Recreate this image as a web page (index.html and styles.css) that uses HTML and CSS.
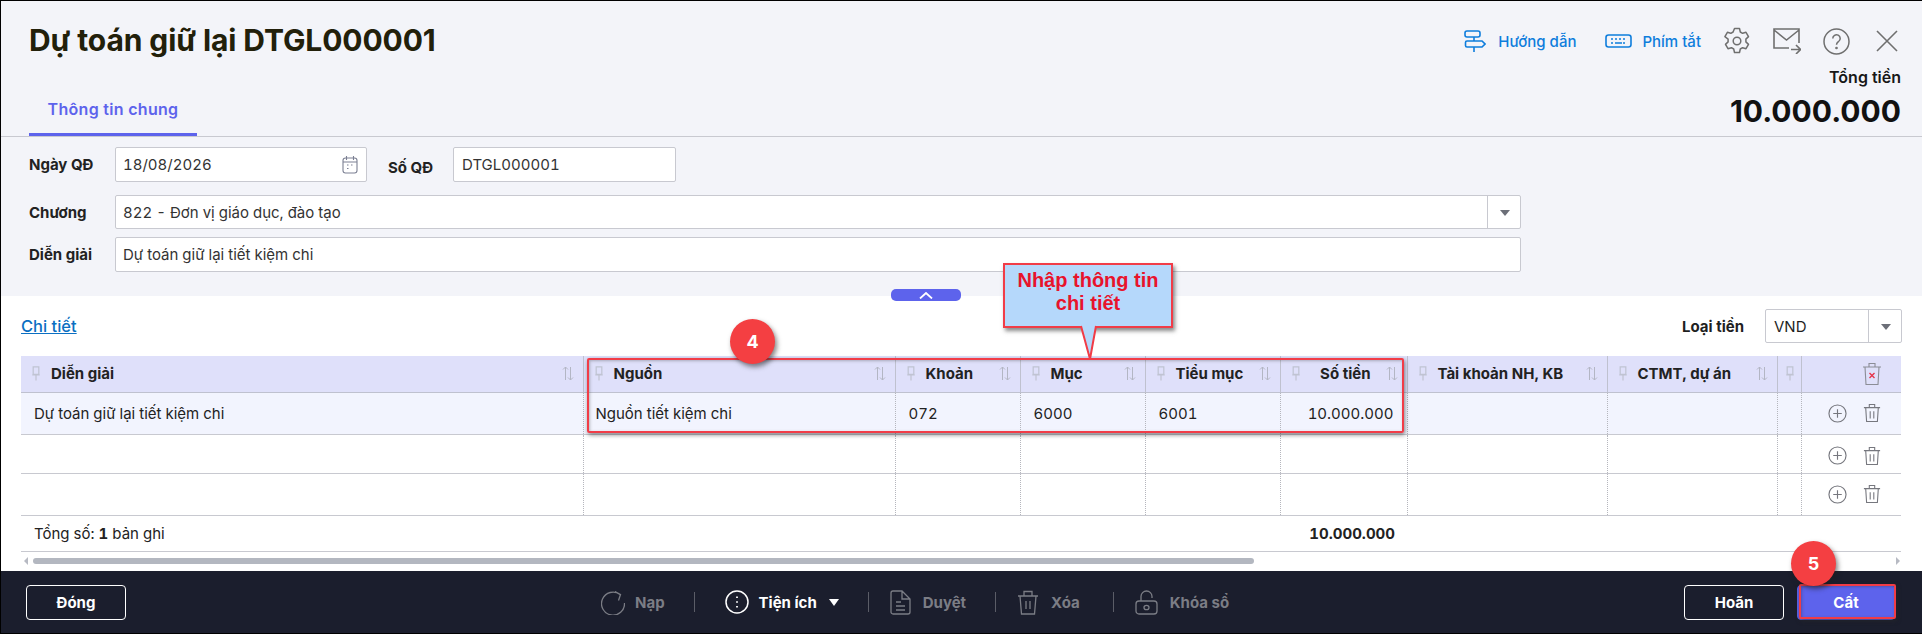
FILE: index.html
```html
<!DOCTYPE html>
<html lang="en">
<head>
  <meta charset="UTF-8">
  <title>Dự toán giữ lại DTGL000001</title>
  <link rel="stylesheet" href="styles.css">
</head>
<body>
  <svg class="defs" width="0" height="0">
    <symbol id="pin" viewBox="0 0 10 16">
      <path d="M2 1h6v8H2zM1 9.500h8M5 10v5.500" fill="none" stroke="currentColor" stroke-width="1.300"/>
    </symbol>
    <symbol id="sort" viewBox="0 0 12 15">
      <path d="M3.500 14V1M1 3.500L3.500 1L6 3.500M8.500 1v13M6 11.500L8.500 14L11 11.500" fill="none" stroke="currentColor" stroke-width="1"/>
    </symbol>
    <symbol id="plus" viewBox="0 0 20 20">
      <circle cx="10" cy="10" r="9" fill="none" stroke="currentColor" stroke-width="1.200"/>
      <path d="M10 5.500v9M5.500 10h9" stroke="currentColor" stroke-width="1.200"/>
    </symbol>
    <symbol id="trash" viewBox="0 0 20 22">
      <path d="M1 5h18M7 5V1.500h6V5M3 5l1 15.500h12L17 5M8 9v8M12 9v8" fill="none" stroke="currentColor" stroke-width="1.200"/>
    </symbol>
  </svg>

  <div class="app">
    <!-- Header -->
    <header class="header">
      <div class="head-top">
        <div class="head-left">
          <h1 class="title">Dự toán giữ lại DTGL000001</h1>
          <a class="tab">Thông tin chung</a>
        </div>
        <div class="head-right">
          <div class="tools">
            <a class="tool-link">
              <svg width="22" height="22" viewBox="0 0 22 22" fill="none" stroke="currentColor" stroke-width="1.600">
                <rect x="1" y="1" width="15" height="6" rx="2"/>
                <path d="M3 11h15l3 3l-3 3H3a1.500 1.500 0 0 1-1.500-1.500v-3A1.500 1.500 0 0 1 3 11zM10 7v4M10 17v5"/>
              </svg>
              Hướng dẫn
            </a>
            <a class="tool-link keys">
              <svg width="27" height="14" viewBox="0 0 27 14" fill="none" stroke="currentColor" stroke-width="1.600">
                <rect x="1" y="1" width="25" height="12" rx="2.500"/>
                <path d="M6 5h2M10 5h2M14 5h2M18 5h2M6 9h2M10 9h7M18 9h2" stroke-width="1.400"/>
              </svg>
              Phím tắt
            </a>
            <svg class="tool-icon gear" width="28" height="28" viewBox="0 0 28 28" fill="none" stroke="currentColor" stroke-width="1.500">
              <circle cx="14" cy="14" r="3.800"/>
              <path d="M11.500 1.500h5l.8 3.500l2.300 1.300l3.400-1l2.500 4.300l-2.600 2.500v2.800l2.600 2.500l-2.500 4.300l-3.400-1l-2.300 1.300l-.8 3.500h-5l-.8-3.500l-2.300-1.300l-3.400 1l-2.500-4.300l2.600-2.500v-2.800L1.900 9.600l2.500-4.300l3.400 1l2.300-1.300z" stroke-linejoin="round"/>
            </svg>
            <svg class="tool-icon mail" width="28" height="26" viewBox="0 0 28 26" fill="none" stroke="currentColor" stroke-width="1.600">
              <path d="M16 20H1V1h25v14M1 2l12.500 10L26 2M18 21.500h9M23 17l4.500 4.500L23 26"/>
            </svg>
            <svg class="tool-icon help" width="27" height="27" viewBox="0 0 27 27" fill="none" stroke="currentColor" stroke-width="1.500">
              <circle cx="13.500" cy="13.500" r="12.500"/>
              <path d="M9.800 10.500a3.700 3.700 0 1 1 5.800 3c-1.300 1-2.100 1.500-2.100 3.200"/>
              <circle cx="13.500" cy="20" r=".6"/>
            </svg>
            <svg class="tool-icon close" width="22" height="22" viewBox="0 0 22 22" fill="none" stroke="currentColor" stroke-width="1.600">
              <path d="M1 1l20 20M21 1L1 21"/>
            </svg>
          </div>
          <div class="total-label">Tổng tiền</div>
          <div class="total-value">10.000.000</div>
        </div>
      </div>

      <form class="info">
        <div class="info-row first">
          <label class="info-label">Ngày QĐ</label>
          <div class="field date">
            18/08/2026
            <svg class="date-icon" width="16" height="19" viewBox="0 0 16 19" fill="none" stroke="#7c8093" stroke-width="1.100">
              <rect x="1" y="3" width="14" height="15" rx="2.500"/>
              <path d="M1 7h14M4.500 1v4M11.500 1v4M5 10h1.500M9 10h1.500M5 13.500h1.500"/>
            </svg>
          </div>
          <label class="info-label second">Số QĐ</label>
          <div class="field number">DTGL000001</div>
        </div>
        <div class="info-row chapter">
          <label class="info-label">Chương</label>
          <div class="field wide">
            <span class="field-text">822 - Đơn vị giáo dục, đào tạo</span>
            <span class="field-arrow"></span>
          </div>
        </div>
        <div class="info-row desc">
          <label class="info-label">Diễn giải</label>
          <div class="field wide">Dự toán giữ lại tiết kiệm chi</div>
        </div>
      </form>
      <button class="collapse" type="button">
        <svg width="14" height="7" viewBox="0 0 14 7" fill="none" stroke="#fff" stroke-width="1.800"><path d="M1 6.500l6-5.500l6 5.500"/></svg>
      </button>
    </header>

    <!-- Detail grid -->
    <section class="detail">
      <div class="detail-bar">
        <a class="detail-link">Chi tiết</a>
        <div class="currency">
          <span class="currency-label">Loại tiền</span>
          <div class="currency-select"><span class="currency-text">VND</span><span class="field-arrow"></span></div>
        </div>
      </div>

      <table class="grid">
        <colgroup>
          <col class="c-desc"><col class="c-source"><col class="c-small"><col class="c-small"><col class="c-sub"><col class="c-amount"><col class="c-bank"><col class="c-ctmt"><col class="c-pin"><col class="c-act">
        </colgroup>
        <thead>
          <tr>
            <th><div class="th"><svg class="pin"><use href="#pin"/></svg><span>Diễn giải</span><svg class="sort"><use href="#sort"/></svg></div></th>
            <th><div class="th"><svg class="pin"><use href="#pin"/></svg><span>Nguồn</span><svg class="sort"><use href="#sort"/></svg></div></th>
            <th><div class="th"><svg class="pin"><use href="#pin"/></svg><span>Khoản</span><svg class="sort"><use href="#sort"/></svg></div></th>
            <th><div class="th"><svg class="pin"><use href="#pin"/></svg><span>Mục</span><svg class="sort"><use href="#sort"/></svg></div></th>
            <th><div class="th"><svg class="pin"><use href="#pin"/></svg><span>Tiểu mục</span><svg class="sort"><use href="#sort"/></svg></div></th>
            <th><div class="th right"><svg class="pin"><use href="#pin"/></svg><span>Số tiền</span><svg class="sort"><use href="#sort"/></svg></div></th>
            <th><div class="th"><svg class="pin"><use href="#pin"/></svg><span>Tài khoản NH, KB</span><svg class="sort"><use href="#sort"/></svg></div></th>
            <th><div class="th"><svg class="pin"><use href="#pin"/></svg><span>CTMT, dự án</span><svg class="sort"><use href="#sort"/></svg></div></th>
            <th><div class="th only-pin"><svg class="pin"><use href="#pin"/></svg></div></th>
            <th class="act-head">
              <svg class="trash-all" width="20" height="24" viewBox="0 0 20 24" fill="none" stroke="#8b8d96" stroke-width="1.100">
                <path d="M1 5h18M7 5V1.500h6V5M3 5l1 17.500h12L17 5"/>
                <path d="M7.500 11l5 5M12.500 11l-5 5" stroke="#e5354a" stroke-width="1.400"/>
              </svg>
            </th>
          </tr>
        </thead>
        <tbody>
          <tr class="row-a selected">
            <td>Dự toán giữ lại tiết kiệm chi</td>
            <td class="source">Nguồn tiết kiệm chi</td>
            <td>072</td>
            <td>6000</td>
            <td>6001</td>
            <td class="num">10.000.000</td>
            <td></td><td></td><td></td>
            <td class="acts"><svg class="plus"><use href="#plus"/></svg><svg class="trash"><use href="#trash"/></svg></td>
          </tr>
          <tr class="row-b">
            <td></td><td></td><td></td><td></td><td></td><td></td><td></td><td></td><td></td>
            <td class="acts"><svg class="plus"><use href="#plus"/></svg><svg class="trash"><use href="#trash"/></svg></td>
          </tr>
          <tr class="row-a">
            <td></td><td></td><td></td><td></td><td></td><td></td><td></td><td></td><td></td>
            <td class="acts"><svg class="plus"><use href="#plus"/></svg><svg class="trash"><use href="#trash"/></svg></td>
          </tr>
        </tbody>
        <tfoot>
          <tr>
            <td colspan="5">Tổng số: <b>1</b> bản ghi</td>
            <td class="num"><b>10.000.000</b></td>
            <td colspan="4"></td>
          </tr>
        </tfoot>
      </table>

      <div class="scroll">
        <span class="scroll-left"></span>
        <span class="scroll-thumb"></span>
        <span class="scroll-right"></span>
      </div>
    </section>

    <!-- Footer actions -->
    <footer class="footer">
      <button class="btn" type="button">Đóng</button>
      <div class="actions">
        <a class="action off nap">
          <svg width="24" height="25" viewBox="0 0 24 25" fill="none" stroke="currentColor" stroke-width="1.300">
            <path d="M19 4.500A11.500 11.500 0 1 0 23.500 13M14 1.500l5.500 3l-2 6"/>
          </svg>
          Nạp
        </a>
        <span class="sep"></span>
        <a class="action on">
          <svg width="24" height="24" viewBox="0 0 24 24" fill="none" stroke="currentColor" stroke-width="1.500">
            <circle cx="12" cy="12" r="11"/>
            <path d="M12 6.500v1.500M12 11.200v1.600M12 16v1.500" stroke-width="1.800"/>
          </svg>
          <span class="on-text">Tiện ích</span>
          <span class="action-arrow"></span>
        </a>
        <span class="sep"></span>
        <a class="action off">
          <svg width="21" height="25" viewBox="0 0 21 25" fill="none" stroke="currentColor" stroke-width="1.300">
            <path d="M1 3a2 2 0 0 1 2-2h9l8 8v13a2 2 0 0 1-2 2H3a2 2 0 0 1-2-2zM12 1v8h8M6 12h5M6 16h9M6 20h9"/>
          </svg>
          Duyệt
        </a>
        <span class="sep"></span>
        <a class="action off xoa">
          <svg width="22" height="25" viewBox="0 0 22 25" fill="none" stroke="currentColor" stroke-width="1.300">
            <path d="M1 6h20M7 6V1.500h8V6M3 6l1.500 18h13L19 6M9 11v8M13 11v8"/>
          </svg>
          Xóa
        </a>
        <span class="sep"></span>
        <a class="action off">
          <svg width="23" height="25" viewBox="0 0 23 25" fill="none" stroke="currentColor" stroke-width="1.300">
            <rect x="1" y="11" width="21" height="13" rx="3"/>
            <path d="M6 11V6.500a5.500 5.500 0 0 1 11 0V8"/>
            <ellipse cx="11.500" cy="17.500" rx="2.500" ry="2.200"/>
          </svg>
          Khóa sổ
        </a>
      </div>
      <div class="footer-right">
        <button class="btn" type="button">Hoãn</button>
        <button class="btn primary" type="button">Cất</button>
      </div>
    </footer>

    <!-- Tutorial annotations drawn over the page -->
    <div class="mark-rect grid-rect"></div>
    <div class="mark-rect save-rect"></div>
    <div class="marker m4">4</div>
    <div class="marker m5">5</div>
    <div class="callout">Nhập thông tin<br>chi tiết</div>
    <svg class="callout-tail" width="20" height="34" viewBox="0 0 20 34">
      <path d="M1 0L10 33L16 0" fill="#b5d8fb" stroke="#f13c47" stroke-width="2"/>
      <path d="M3 0h12v-2H3z" fill="#b5d8fb"/>
    </svg>
  </div>
</body>
</html>
```

FILE: styles.css
```css
* {
  box-sizing: border-box;
}

body {
  margin: 0;
  font-family: Inter, sans-serif;
  font-size: 15px;
  color: #1f1f1f;
  background: #fff;
  overflow: hidden;
}

.defs {
  position: absolute;
}

.app {
  position: relative;
  display: flex;
  flex-direction: column;
  width: 1922px;
  height: 634px;
  border-top: 1px solid #000;
  border-left: 1px solid #000;
  border-bottom: 1px solid #000;
  overflow: hidden;
}


/* header */
.header {
  position: relative;
  height: 295px;
  background: #f3f4f9;
}

.head-top {
  display: flex;
  justify-content: space-between;
  height: 136px;
  padding: 0 21px 0 28px;
  border-bottom: 1px solid #c8c9d0;
}

.head-left {
  display: flex;
  flex-direction: column;
  justify-content: space-between;
  align-items: flex-start;
}

.title {
  margin: 19px 0 0;
  font-size: 30px;
  line-height: 40px;
  font-weight: 700;
  letter-spacing: -.1px;
  color: #22200a;
}

.tab {
  width: 168px;
  height: 40px;
  padding-top: 1px;
  text-align: center;
  font-size: 16px;
  letter-spacing: .3px;
  line-height: 24px;
  font-weight: 600;
  color: #5d63ec;
  border-bottom: 3px solid #5d63ec;
}

.head-right {
  display: flex;
  flex-direction: column;
  align-items: flex-end;
}

.tools {
  display: flex;
  align-items: center;
  height: 28px;
  margin-top: 26px;
  margin-right: 3px;
}

.tool-link {
  display: flex;
  align-items: center;
  gap: 12px;
  font-size: 15px;
  font-weight: 500;
  color: #0e7ddc;
}

.tool-link.keys {
  gap: 10px;
  margin-left: 29px;
}

.tool-icon {
  color: #6f6f6f;
}

.gear {
  margin-left: 22px;
}

.mail,
.help {
  margin-left: 22px;
}

.close {
  margin-left: 26px;
}

.total-label {
  margin-top: 11px;
  font-size: 16px;
  line-height: 22px;
  font-weight: 600;
  color: #171717;
}

.total-value {
  margin-top: 3px;
  font-size: 30px;
  line-height: 40px;
  font-weight: 700;
  color: #111;
}


/* form */
.info {
  padding: 10px 0 0 28px;
}

.info-row {
  display: flex;
  align-items: center;
}

.info-row.chapter {
  margin-top: 13px;
}

.info-row.desc {
  margin-top: 8px;
}

.info-label {
  width: 86px;
  font-weight: 700;
  font-size: 15px;
  color: #222;
}

.info-label.second {
  width: 65px;
  margin: 6px 0 0 21px;
}

.field {
  display: flex;
  align-items: center;
  justify-content: space-between;
  height: 35px;
  padding-left: 7px;
  font-size: 15px;
  font-variant-numeric: tabular-nums;
  color: #333;
  background: #fff;
  border: 1px solid #c8c9d0;
  border-radius: 2px;
}

.field.date {
  width: 252px;
  padding-right: 8px;
}

.field.number {
  width: 223px;
  padding-left: 8px;
}

.field.wide {
  width: 1406px;
}

.chapter .field {
  height: 34px;
}

.field-text {
  flex: 1;
}

.field-arrow {
  position: relative;
  display: block;
  width: 33px;
  height: 100%;
  border-left: 1px solid #c8c9d0;
}

.field-arrow::after {
  content: "";
  position: absolute;
  left: 12px;
  top: 14px;
  border-top: 6px solid #6c6f78;
  border-left: 5px solid transparent;
  border-right: 5px solid transparent;
}

.collapse {
  position: absolute;
  left: 890px;
  top: 288px;
  display: flex;
  align-items: center;
  justify-content: center;
  width: 70px;
  height: 12px;
  padding: 0;
  background: #5d63ec;
  border: none;
  border-radius: 5px;
}


/* detail grid */
.detail {
  flex: 1;
  padding: 0 20px;
  background: #fff;
}

.detail-bar {
  display: flex;
  justify-content: space-between;
  align-items: center;
  height: 60px;
}

.detail-link {
  font-size: 16.500px;
  font-weight: 500;
  color: #0a6fc2;
  text-decoration: underline;
}

.currency {
  display: flex;
  align-items: center;
  gap: 21px;
}

.currency-label {
  font-weight: 700;
  font-size: 15px;
}

.currency-select {
  display: flex;
  align-items: center;
  justify-content: space-between;
  width: 137px;
  height: 34px;
  padding-left: 8px;
  border: 1px solid #c8c9d0;
  border-radius: 2px;
}

.grid {
  width: 1880px;
  table-layout: fixed;
  border-collapse: collapse;
}

.c-desc { width: 562px; }
.c-source { width: 312px; }
.c-small { width: 125px; }
.c-sub { width: 135px; }
.c-amount { width: 127px; }
.c-bank { width: 200px; }
.c-ctmt { width: 170px; }
.c-pin { width: 24px; }
.c-act { width: 100px; }

.grid th {
  height: 36px;
  padding: 0;
  background: #dfe0fa;
  border-right: 1px solid #bfc1cf;
  border-bottom: 1px solid #bfc1cf;
}

.grid th:last-child,
.grid td:last-child {
  border-right: none;
}

.th {
  display: flex;
  align-items: center;
  height: 100%;
  padding: 0 9px 0 10px;
  font-size: 15px;
  font-weight: 700;
  color: #222;
}

.th span {
  flex: 1;
  margin-left: 10px;
  text-align: left;
}

.th.right span {
  text-align: right;
  margin-right: 15px;
}

.th.only-pin {
  padding: 0 0 0 7px;
}

.pin {
  width: 10px;
  height: 15px;
  color: #c0c3d2;
  flex: none;
}

.sort {
  width: 12px;
  height: 15px;
  color: #b3b6c4;
  flex: none;
}

.act-head {
  text-align: right;
}

.trash-all {
  display: inline-block;
  margin: 4px 19px 0 0;
}

.grid td {
  padding: 0 13px;
  font-size: 15px;
  font-variant-numeric: tabular-nums;
  color: #222;
  border-right: 1px dotted #b5b6bd;
  border-bottom: 1px solid #c8c9d0;
}

.row-a td {
  height: 42px;
}

.row-b td {
  height: 39px;
}

.selected td {
  background: #f2f4fe;
}

.grid td.source {
  padding-left: 12px;
}

.grid td.num {
  padding: 0 13px 0 0;
  text-align: right;
}

.grid tfoot td.num {
  padding-right: 12px;
}

.grid td.acts {
  padding: 0;
  text-align: left;
}

.grid .row-b td.acts {
  padding-top: 4px;
}

.plus {
  width: 19px;
  height: 19px;
  margin-left: 26px;
  vertical-align: middle;
  color: #76777e;
}

.trash {
  width: 18px;
  height: 20px;
  margin-left: 16px;
  vertical-align: middle;
  color: #76777e;
}

.grid tfoot td {
  height: 36px;
  border-right: none;
}

.scroll {
  position: relative;
  display: flex;
  align-items: center;
  height: 18px;
  padding-top: 1px;
}

.scroll-left {
  width: 0;
  height: 0;
  margin-left: 3px;
  border-top: 4px solid transparent;
  border-bottom: 4px solid transparent;
  border-right: 4px solid #b7bac3;
}

.scroll-thumb {
  width: 1221px;
  height: 6px;
  margin-left: 5px;
  background: #b3b7c0;
  border-radius: 3px;
}

.scroll-right {
  width: 0;
  height: 0;
  margin-left: auto;
  margin-right: 2px;
  border-top: 4px solid transparent;
  border-bottom: 4px solid transparent;
  border-left: 4px solid #b7bac3;
}


/* footer */
.footer {
  display: flex;
  align-items: center;
  height: 62px;
  padding: 0 27px 0 25px;
  background: #1b1e2d;
}

.btn {
  width: 100px;
  height: 35px;
  font-family: Inter, sans-serif;
  font-size: 15px;
  font-weight: 700;
  color: #fff;
  background: transparent;
  border: 1px solid #fff;
  border-radius: 4px;
}

.btn.primary {
  width: 98px;
  margin-left: 13px;
  background: #5d63ec;
  border-color: #5d63ec;
}

.actions {
  display: flex;
  align-items: center;
  margin-left: 475px;
  font-size: 15px;
  font-weight: 700;
}

.action {
  display: flex;
  align-items: center;
  gap: 12px;
}

.off {
  color: #7b7d85;
}

.nap {
  gap: 10px;
}

.xoa {
  margin-right: 4px;
}

.on {
  margin-left: 9px;
  color: #fff;
}

.on-text {
  margin-left: -2px;
}

.action-arrow {
  width: 0;
  height: 0;
  border-top: 7px solid #fff;
  border-left: 5px solid transparent;
  border-right: 5px solid transparent;
}

.sep {
  width: 1px;
  height: 20px;
  margin: 0 21px 0 29px;
  background: #5b5d67;
}

.footer-right {
  display: flex;
  margin-left: auto;
}


/* annotations */
.mark-rect {
  position: absolute;
  border: 2px solid #f13c47;
  border-radius: 2px;
  box-shadow: 1px 2px 4px rgba(40, 40, 40, .55), inset 1px 1px 3px rgba(40, 40, 40, .3);
}

.grid-rect {
  left: 586px;
  top: 357px;
  width: 817px;
  height: 75px;
}

.save-rect {
  left: 1798px;
  top: 583px;
  width: 97px;
  height: 35px;
}

.marker {
  position: absolute;
  width: 45px;
  height: 45px;
  text-align: center;
  font-size: 18px;
  line-height: 45px;
  font-weight: 700;
  color: #fff;
  background: #f43f42;
  border-radius: 50%;
  box-shadow: 2px 3px 5px rgba(30, 30, 30, .55);
}

.m4 {
  left: 729px;
  top: 318px;
}

.m5 {
  left: 1790px;
  top: 540px;
}

.callout {
  position: absolute;
  left: 1002px;
  top: 262px;
  width: 170px;
  height: 65px;
  padding-top: 4px;
  text-align: center;
  font-family: "Liberation Sans", sans-serif;
  font-size: 20px;
  line-height: 23px;
  font-weight: 700;
  color: #e8132c;
  background: #b5d8fb;
  border: 2px solid #f13c47;
  box-shadow: 2px 3px 4px rgba(40, 40, 40, .55);
}

.callout-tail {
  position: absolute;
  left: 1079px;
  top: 325px;
  overflow: visible;
}
```
